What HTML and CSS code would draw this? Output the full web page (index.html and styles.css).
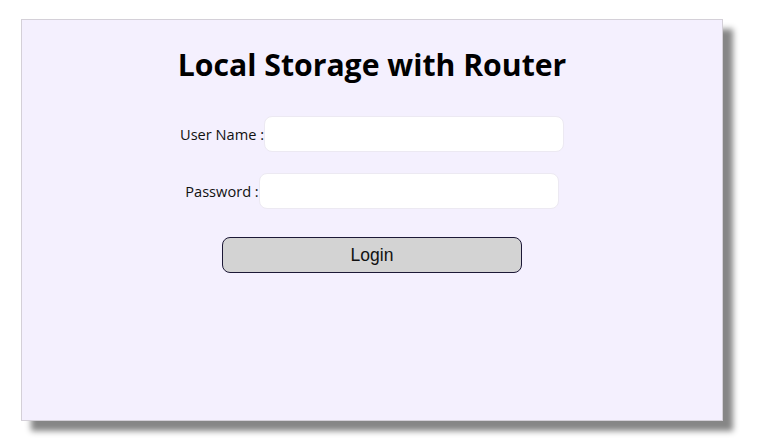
FILE: index.html
```html
<!DOCTYPE html>
<html>
<head>
<meta charset="utf-8">
<link rel="stylesheet" href="styles.css">
</head>
<body>
<div class="card">
  <h1 class="title">Local Storage with Router</h1>
  <form class="form">
    <div class="row">
      <label class="label">User Name :</label>
      <input class="field" type="text">
    </div>
    <div class="row">
      <label class="label">Password :</label>
      <input class="field" type="password">
    </div>
    <button class="btn" type="button">Login</button>
  </form>
</div>
</body>
</html>
```
FILE: styles.css
```css
html, body {
  margin: 0;
  padding: 0;
  background: #ffffff;
}
body {
  padding-bottom: 26px;
}
.card {
  box-sizing: border-box;
  width: 702px;
  height: 402px;
  margin: 19px 0 0 21px;
  background: #f4f0fe;
  border: 1px solid #d4d0d8;
  box-shadow: 10px 10px 6px #868686;
  display: flex;
  flex-direction: column;
  align-items: center;
  font-family: "Open Sans", sans-serif;
}
.title {
  margin: 25px 0 0 0;
  font-size: 30.2px;
  font-weight: 700;
  line-height: 40px;
  color: #000;
}
.form {
  display: flex;
  flex-direction: column;
  align-items: center;
  margin-top: 31px;
}
.row {
  display: flex;
  align-items: center;
  margin-bottom: 21px;
}
.label {
  font-size: 14.6px;
  color: #111;
}
.field {
  box-sizing: border-box;
  width: 300px;
  height: 36px;
  border: 1px solid #ece9f2;
  border-radius: 8px;
  background: #fff;
  margin: 0;
  outline: none;
}
.btn {
  box-sizing: border-box;
  width: 300px;
  height: 36px;
  margin-top: 7px;
  background: #d3d3d3;
  border: 1px solid #1c1836;
  border-radius: 8px;
  font-family: "Liberation Sans", Arial, sans-serif;
  font-size: 17.5px;
  color: #111;
}
```
